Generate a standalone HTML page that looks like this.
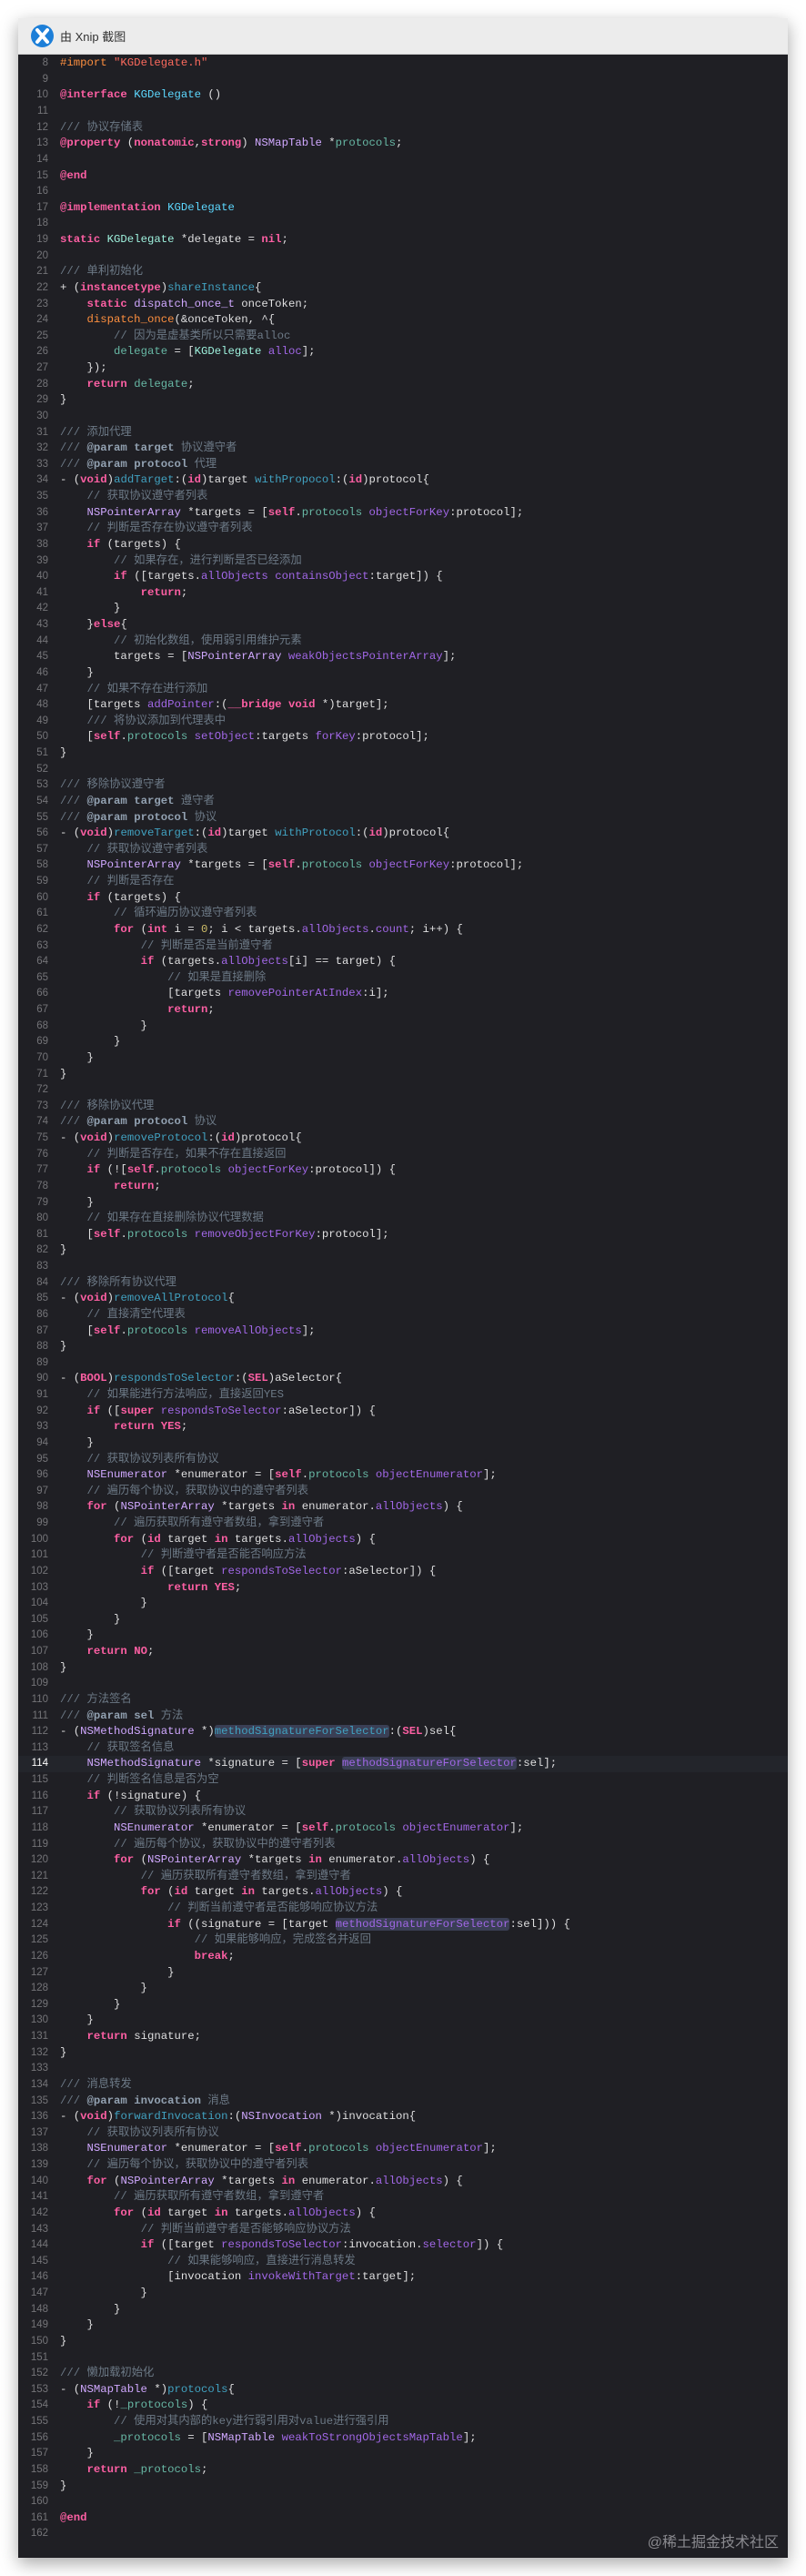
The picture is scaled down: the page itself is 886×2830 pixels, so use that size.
<!DOCTYPE html>
<html><head><meta charset="utf-8"><style>
html,body{margin:0;padding:0;background:#fff;}
body{width:886px;height:2830px;position:relative;overflow:hidden;font-family:"Liberation Sans","Noto Sans CJK SC",sans-serif;}
.win{position:absolute;left:20px;top:20px;width:846px;height:2790px;background:#1f1f24;box-shadow:0 6px 18px rgba(0,0,0,.35);}
.tb{position:absolute;left:0;top:0;width:846px;height:39px;background:#ececec;border-bottom:1px solid #d0d0d0;}
.tb .t{position:absolute;left:46px;top:10px;font-size:13px;color:#333;}
.ico{position:absolute;left:14px;top:7px;width:25px;height:25px;border-radius:50%;background:#1d7fd8;}
.code{position:absolute;left:0;top:41.2px;width:846px;font-family:"Liberation Mono","Noto Sans CJK SC",monospace;font-size:12.3px;color:#dfdfe0;}
.l{height:17.63px;line-height:17.63px;white-space:pre;position:relative;}
.l i{font-style:normal;position:absolute;left:0;width:33px;text-align:right;color:#747478;font-family:"Liberation Sans",sans-serif;font-size:11.5px;}
.l b{font-weight:normal;position:absolute;left:46px;}
.cur{background:#23252b;}
.cur i{color:#fff;}
.k{color:#fc5fa3;font-weight:bold}
.c{color:#6c7986}
.cd{color:#92a1b1;font-weight:bold}
.s{color:#fc6a5d}
.p{color:#fd8f3f}
.t{color:#5dd8ff}
.g{color:#9ef1dd}
.o{color:#d0a8ff}
.m{color:#a167e6}
.d{color:#41a1c0}
.v{color:#67b7a4}
.n{color:#d0bf69}
.h{background:#3a3f55;border-radius:3px}
.wm{position:absolute;right:30px;top:2779px;font-size:16px;color:#8a8a8f;font-family:"Liberation Sans","Noto Sans CJK SC",sans-serif;}
</style></head><body>
<div class="win">
<div class="tb"><div class="ico"><svg width="25" height="25" viewBox="0 0 25 25"><path d="M7 6 L18 19 M18 6 L7 19" stroke="#fff" stroke-width="4" stroke-linecap="round"/></svg></div><div class="t">由 Xnip 截图</div></div>
<div class="code">
<div class="l"><i>8</i><b><span class="p">#import </span><span class="s">"KGDelegate.h"</span></b></div>
<div class="l"><i>9</i><b></b></div>
<div class="l"><i>10</i><b><span class="k">@interface</span> <span class="t">KGDelegate</span> ()</b></div>
<div class="l"><i>11</i><b></b></div>
<div class="l"><i>12</i><b><span class="c">/// 协议存储表</span></b></div>
<div class="l"><i>13</i><b><span class="k">@property</span> (<span class="k">nonatomic</span>,<span class="k">strong</span>) <span class="o">NSMapTable</span> *<span class="v">protocols</span>;</b></div>
<div class="l"><i>14</i><b></b></div>
<div class="l"><i>15</i><b><span class="k">@end</span></b></div>
<div class="l"><i>16</i><b></b></div>
<div class="l"><i>17</i><b><span class="k">@implementation</span> <span class="t">KGDelegate</span></b></div>
<div class="l"><i>18</i><b></b></div>
<div class="l"><i>19</i><b><span class="k">static</span> <span class="g">KGDelegate</span> *delegate = <span class="k">nil</span>;</b></div>
<div class="l"><i>20</i><b></b></div>
<div class="l"><i>21</i><b><span class="c">/// 单利初始化</span></b></div>
<div class="l"><i>22</i><b>+ (<span class="k">instancetype</span>)<span class="d">shareInstance</span>{</b></div>
<div class="l"><i>23</i><b>    <span class="k">static</span> <span class="o">dispatch_once_t</span> onceToken;</b></div>
<div class="l"><i>24</i><b>    <span class="p">dispatch_once</span>(&amp;onceToken, ^{</b></div>
<div class="l"><i>25</i><b>        <span class="c">// 因为是虚基类所以只需要alloc</span></b></div>
<div class="l"><i>26</i><b>        <span class="v">delegate</span> = [<span class="g">KGDelegate</span> <span class="m">alloc</span>];</b></div>
<div class="l"><i>27</i><b>    });</b></div>
<div class="l"><i>28</i><b>    <span class="k">return</span> <span class="v">delegate</span>;</b></div>
<div class="l"><i>29</i><b>}</b></div>
<div class="l"><i>30</i><b></b></div>
<div class="l"><i>31</i><b><span class="c">/// 添加代理</span></b></div>
<div class="l"><i>32</i><b><span class="c">/// <span class="cd">@param</span> <span class="cd">target</span> 协议遵守者</span></b></div>
<div class="l"><i>33</i><b><span class="c">/// <span class="cd">@param</span> <span class="cd">protocol</span> 代理</span></b></div>
<div class="l"><i>34</i><b>- (<span class="k">void</span>)<span class="d">addTarget</span>:(<span class="k">id</span>)target <span class="d">withPropocol</span>:(<span class="k">id</span>)protocol{</b></div>
<div class="l"><i>35</i><b>    <span class="c">// 获取协议遵守者列表</span></b></div>
<div class="l"><i>36</i><b>    <span class="o">NSPointerArray</span> *targets = [<span class="k">self</span>.<span class="v">protocols</span> <span class="m">objectForKey</span>:protocol];</b></div>
<div class="l"><i>37</i><b>    <span class="c">// 判断是否存在协议遵守者列表</span></b></div>
<div class="l"><i>38</i><b>    <span class="k">if</span> (targets) {</b></div>
<div class="l"><i>39</i><b>        <span class="c">// 如果存在，进行判断是否已经添加</span></b></div>
<div class="l"><i>40</i><b>        <span class="k">if</span> ([targets.<span class="m">allObjects</span> <span class="m">containsObject</span>:target]) {</b></div>
<div class="l"><i>41</i><b>            <span class="k">return</span>;</b></div>
<div class="l"><i>42</i><b>        }</b></div>
<div class="l"><i>43</i><b>    }<span class="k">else</span>{</b></div>
<div class="l"><i>44</i><b>        <span class="c">// 初始化数组，使用弱引用维护元素</span></b></div>
<div class="l"><i>45</i><b>        targets = [<span class="o">NSPointerArray</span> <span class="m">weakObjectsPointerArray</span>];</b></div>
<div class="l"><i>46</i><b>    }</b></div>
<div class="l"><i>47</i><b>    <span class="c">// 如果不存在进行添加</span></b></div>
<div class="l"><i>48</i><b>    [targets <span class="m">addPointer</span>:(<span class="k">__bridge</span> <span class="k">void</span> *)target];</b></div>
<div class="l"><i>49</i><b>    <span class="c">/// 将协议添加到代理表中</span></b></div>
<div class="l"><i>50</i><b>    [<span class="k">self</span>.<span class="v">protocols</span> <span class="m">setObject</span>:targets <span class="m">forKey</span>:protocol];</b></div>
<div class="l"><i>51</i><b>}</b></div>
<div class="l"><i>52</i><b></b></div>
<div class="l"><i>53</i><b><span class="c">/// 移除协议遵守者</span></b></div>
<div class="l"><i>54</i><b><span class="c">/// <span class="cd">@param</span> <span class="cd">target</span> 遵守者</span></b></div>
<div class="l"><i>55</i><b><span class="c">/// <span class="cd">@param</span> <span class="cd">protocol</span> 协议</span></b></div>
<div class="l"><i>56</i><b>- (<span class="k">void</span>)<span class="d">removeTarget</span>:(<span class="k">id</span>)target <span class="d">withProtocol</span>:(<span class="k">id</span>)protocol{</b></div>
<div class="l"><i>57</i><b>    <span class="c">// 获取协议遵守者列表</span></b></div>
<div class="l"><i>58</i><b>    <span class="o">NSPointerArray</span> *targets = [<span class="k">self</span>.<span class="v">protocols</span> <span class="m">objectForKey</span>:protocol];</b></div>
<div class="l"><i>59</i><b>    <span class="c">// 判断是否存在</span></b></div>
<div class="l"><i>60</i><b>    <span class="k">if</span> (targets) {</b></div>
<div class="l"><i>61</i><b>        <span class="c">// 循环遍历协议遵守者列表</span></b></div>
<div class="l"><i>62</i><b>        <span class="k">for</span> (<span class="k">int</span> i = <span class="n">0</span>; i &lt; targets.<span class="m">allObjects</span>.<span class="m">count</span>; i++) {</b></div>
<div class="l"><i>63</i><b>            <span class="c">// 判断是否是当前遵守者</span></b></div>
<div class="l"><i>64</i><b>            <span class="k">if</span> (targets.<span class="m">allObjects</span>[i] == target) {</b></div>
<div class="l"><i>65</i><b>                <span class="c">// 如果是直接删除</span></b></div>
<div class="l"><i>66</i><b>                [targets <span class="m">removePointerAtIndex</span>:i];</b></div>
<div class="l"><i>67</i><b>                <span class="k">return</span>;</b></div>
<div class="l"><i>68</i><b>            }</b></div>
<div class="l"><i>69</i><b>        }</b></div>
<div class="l"><i>70</i><b>    }</b></div>
<div class="l"><i>71</i><b>}</b></div>
<div class="l"><i>72</i><b></b></div>
<div class="l"><i>73</i><b><span class="c">/// 移除协议代理</span></b></div>
<div class="l"><i>74</i><b><span class="c">/// <span class="cd">@param</span> <span class="cd">protocol</span> 协议</span></b></div>
<div class="l"><i>75</i><b>- (<span class="k">void</span>)<span class="d">removeProtocol</span>:(<span class="k">id</span>)protocol{</b></div>
<div class="l"><i>76</i><b>    <span class="c">// 判断是否存在，如果不存在直接返回</span></b></div>
<div class="l"><i>77</i><b>    <span class="k">if</span> (![<span class="k">self</span>.<span class="v">protocols</span> <span class="m">objectForKey</span>:protocol]) {</b></div>
<div class="l"><i>78</i><b>        <span class="k">return</span>;</b></div>
<div class="l"><i>79</i><b>    }</b></div>
<div class="l"><i>80</i><b>    <span class="c">// 如果存在直接删除协议代理数据</span></b></div>
<div class="l"><i>81</i><b>    [<span class="k">self</span>.<span class="v">protocols</span> <span class="m">removeObjectForKey</span>:protocol];</b></div>
<div class="l"><i>82</i><b>}</b></div>
<div class="l"><i>83</i><b></b></div>
<div class="l"><i>84</i><b><span class="c">/// 移除所有协议代理</span></b></div>
<div class="l"><i>85</i><b>- (<span class="k">void</span>)<span class="d">removeAllProtocol</span>{</b></div>
<div class="l"><i>86</i><b>    <span class="c">// 直接清空代理表</span></b></div>
<div class="l"><i>87</i><b>    [<span class="k">self</span>.<span class="v">protocols</span> <span class="m">removeAllObjects</span>];</b></div>
<div class="l"><i>88</i><b>}</b></div>
<div class="l"><i>89</i><b></b></div>
<div class="l"><i>90</i><b>- (<span class="k">BOOL</span>)<span class="d">respondsToSelector</span>:(<span class="k">SEL</span>)aSelector{</b></div>
<div class="l"><i>91</i><b>    <span class="c">// 如果能进行方法响应，直接返回YES</span></b></div>
<div class="l"><i>92</i><b>    <span class="k">if</span> ([<span class="k">super</span> <span class="m">respondsToSelector</span>:aSelector]) {</b></div>
<div class="l"><i>93</i><b>        <span class="k">return</span> <span class="k">YES</span>;</b></div>
<div class="l"><i>94</i><b>    }</b></div>
<div class="l"><i>95</i><b>    <span class="c">// 获取协议列表所有协议</span></b></div>
<div class="l"><i>96</i><b>    <span class="o">NSEnumerator</span> *enumerator = [<span class="k">self</span>.<span class="v">protocols</span> <span class="m">objectEnumerator</span>];</b></div>
<div class="l"><i>97</i><b>    <span class="c">// 遍历每个协议，获取协议中的遵守者列表</span></b></div>
<div class="l"><i>98</i><b>    <span class="k">for</span> (<span class="o">NSPointerArray</span> *targets <span class="k">in</span> enumerator.<span class="m">allObjects</span>) {</b></div>
<div class="l"><i>99</i><b>        <span class="c">// 遍历获取所有遵守者数组，拿到遵守者</span></b></div>
<div class="l"><i>100</i><b>        <span class="k">for</span> (<span class="k">id</span> target <span class="k">in</span> targets.<span class="m">allObjects</span>) {</b></div>
<div class="l"><i>101</i><b>            <span class="c">// 判断遵守者是否能否响应方法</span></b></div>
<div class="l"><i>102</i><b>            <span class="k">if</span> ([target <span class="m">respondsToSelector</span>:aSelector]) {</b></div>
<div class="l"><i>103</i><b>                <span class="k">return</span> <span class="k">YES</span>;</b></div>
<div class="l"><i>104</i><b>            }</b></div>
<div class="l"><i>105</i><b>        }</b></div>
<div class="l"><i>106</i><b>    }</b></div>
<div class="l"><i>107</i><b>    <span class="k">return</span> <span class="k">NO</span>;</b></div>
<div class="l"><i>108</i><b>}</b></div>
<div class="l"><i>109</i><b></b></div>
<div class="l"><i>110</i><b><span class="c">/// 方法签名</span></b></div>
<div class="l"><i>111</i><b><span class="c">/// <span class="cd">@param</span> <span class="cd">sel</span> 方法</span></b></div>
<div class="l"><i>112</i><b>- (<span class="o">NSMethodSignature</span> *)<span class="d h">methodSignatureForSelector</span>:(<span class="k">SEL</span>)sel{</b></div>
<div class="l"><i>113</i><b>    <span class="c">// 获取签名信息</span></b></div>
<div class="l cur"><i>114</i><b>    <span class="o">NSMethodSignature</span> *signature = [<span class="k">super</span> <span class="m h">methodSignatureForSelector</span>:sel];</b></div>
<div class="l"><i>115</i><b>    <span class="c">// 判断签名信息是否为空</span></b></div>
<div class="l"><i>116</i><b>    <span class="k">if</span> (!signature) {</b></div>
<div class="l"><i>117</i><b>        <span class="c">// 获取协议列表所有协议</span></b></div>
<div class="l"><i>118</i><b>        <span class="o">NSEnumerator</span> *enumerator = [<span class="k">self</span>.<span class="v">protocols</span> <span class="m">objectEnumerator</span>];</b></div>
<div class="l"><i>119</i><b>        <span class="c">// 遍历每个协议，获取协议中的遵守者列表</span></b></div>
<div class="l"><i>120</i><b>        <span class="k">for</span> (<span class="o">NSPointerArray</span> *targets <span class="k">in</span> enumerator.<span class="m">allObjects</span>) {</b></div>
<div class="l"><i>121</i><b>            <span class="c">// 遍历获取所有遵守者数组，拿到遵守者</span></b></div>
<div class="l"><i>122</i><b>            <span class="k">for</span> (<span class="k">id</span> target <span class="k">in</span> targets.<span class="m">allObjects</span>) {</b></div>
<div class="l"><i>123</i><b>                <span class="c">// 判断当前遵守者是否能够响应协议方法</span></b></div>
<div class="l"><i>124</i><b>                <span class="k">if</span> ((signature = [target <span class="m h">methodSignatureForSelector</span>:sel])) {</b></div>
<div class="l"><i>125</i><b>                    <span class="c">// 如果能够响应，完成签名并返回</span></b></div>
<div class="l"><i>126</i><b>                    <span class="k">break</span>;</b></div>
<div class="l"><i>127</i><b>                }</b></div>
<div class="l"><i>128</i><b>            }</b></div>
<div class="l"><i>129</i><b>        }</b></div>
<div class="l"><i>130</i><b>    }</b></div>
<div class="l"><i>131</i><b>    <span class="k">return</span> signature;</b></div>
<div class="l"><i>132</i><b>}</b></div>
<div class="l"><i>133</i><b></b></div>
<div class="l"><i>134</i><b><span class="c">/// 消息转发</span></b></div>
<div class="l"><i>135</i><b><span class="c">/// <span class="cd">@param</span> <span class="cd">invocation</span> 消息</span></b></div>
<div class="l"><i>136</i><b>- (<span class="k">void</span>)<span class="d">forwardInvocation</span>:(<span class="o">NSInvocation</span> *)invocation{</b></div>
<div class="l"><i>137</i><b>    <span class="c">// 获取协议列表所有协议</span></b></div>
<div class="l"><i>138</i><b>    <span class="o">NSEnumerator</span> *enumerator = [<span class="k">self</span>.<span class="v">protocols</span> <span class="m">objectEnumerator</span>];</b></div>
<div class="l"><i>139</i><b>    <span class="c">// 遍历每个协议，获取协议中的遵守者列表</span></b></div>
<div class="l"><i>140</i><b>    <span class="k">for</span> (<span class="o">NSPointerArray</span> *targets <span class="k">in</span> enumerator.<span class="m">allObjects</span>) {</b></div>
<div class="l"><i>141</i><b>        <span class="c">// 遍历获取所有遵守者数组，拿到遵守者</span></b></div>
<div class="l"><i>142</i><b>        <span class="k">for</span> (<span class="k">id</span> target <span class="k">in</span> targets.<span class="m">allObjects</span>) {</b></div>
<div class="l"><i>143</i><b>            <span class="c">// 判断当前遵守者是否能够响应协议方法</span></b></div>
<div class="l"><i>144</i><b>            <span class="k">if</span> ([target <span class="m">respondsToSelector</span>:invocation.<span class="m">selector</span>]) {</b></div>
<div class="l"><i>145</i><b>                <span class="c">// 如果能够响应，直接进行消息转发</span></b></div>
<div class="l"><i>146</i><b>                [invocation <span class="m">invokeWithTarget</span>:target];</b></div>
<div class="l"><i>147</i><b>            }</b></div>
<div class="l"><i>148</i><b>        }</b></div>
<div class="l"><i>149</i><b>    }</b></div>
<div class="l"><i>150</i><b>}</b></div>
<div class="l"><i>151</i><b></b></div>
<div class="l"><i>152</i><b><span class="c">/// 懒加载初始化</span></b></div>
<div class="l"><i>153</i><b>- (<span class="o">NSMapTable</span> *)<span class="d">protocols</span>{</b></div>
<div class="l"><i>154</i><b>    <span class="k">if</span> (!<span class="v">_protocols</span>) {</b></div>
<div class="l"><i>155</i><b>        <span class="c">// 使用对其内部的key进行弱引用对value进行强引用</span></b></div>
<div class="l"><i>156</i><b>        <span class="v">_protocols</span> = [<span class="o">NSMapTable</span> <span class="m">weakToStrongObjectsMapTable</span>];</b></div>
<div class="l"><i>157</i><b>    }</b></div>
<div class="l"><i>158</i><b>    <span class="k">return</span> <span class="v">_protocols</span>;</b></div>
<div class="l"><i>159</i><b>}</b></div>
<div class="l"><i>160</i><b></b></div>
<div class="l"><i>161</i><b><span class="k">@end</span></b></div>
<div class="l"><i>162</i><b></b></div>
</div>
</div>
<div class="wm">@稀土掘金技术社区</div>
</body></html>
